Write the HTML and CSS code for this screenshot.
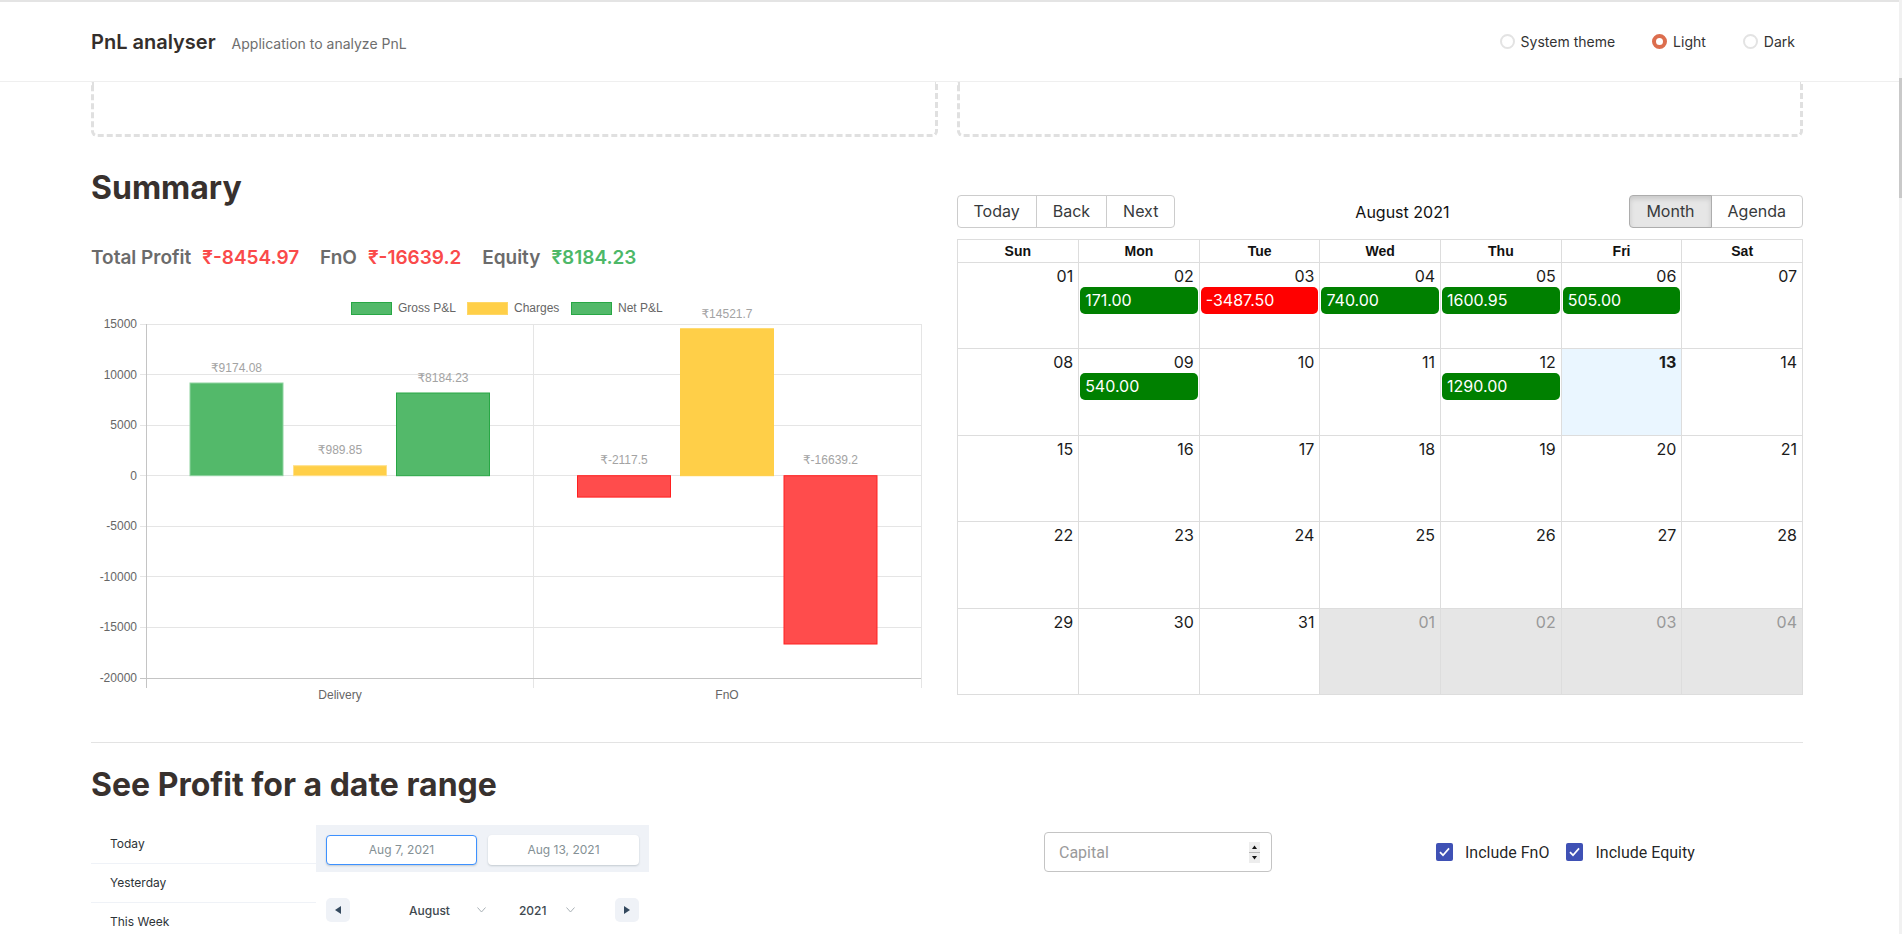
FILE: index.html
```html
<!DOCTYPE html>
<html lang="en">
<head>
<meta charset="utf-8">
<title>PnL analyser</title>
<link rel="stylesheet" href="styles.css">
</head>
<body>
<header class="topbar">
  <div class="container topbar-inner">
    <div class="brand">
      <span class="brand-title">PnL analyser</span>
      <span class="brand-sub">Application to analyze PnL</span>
    </div>
    <div class="theme">
      <label class="radio"><span class="radio-dot"></span>System theme</label>
      <label class="radio"><span class="radio-dot on"></span>Light</label>
      <label class="radio"><span class="radio-dot"></span>Dark</label>
    </div>
  </div>
</header>

<main class="container">
  <div class="drops">
    <div class="drop"></div>
    <div class="drop"></div>
  </div>

  <section class="summary">
    <div class="summary-left">
      <h2 class="h2">Summary</h2>
      <div class="totals">
        <span class="t-label">Total Profit</span><span class="t-val neg">₹-8454.97</span>
        <span class="t-label">FnO</span><span class="t-val neg">₹-16639.2</span>
        <span class="t-label">Equity</span><span class="t-val pos">₹8184.23</span>
      </div>
      <svg class="chart" width="847" height="420" viewBox="0 0 847 420" xmlns="http://www.w3.org/2000/svg">
        <g class="legend">
          <rect x="260.5" y="12.5" width="40" height="12" fill="#53b96a" stroke="#28a745"/>
          <text x="307" y="22">Gross P&amp;L</text>
          <rect x="376.5" y="12.5" width="40" height="12" fill="#ffcf48" stroke="#ffd766"/>
          <text x="423" y="22">Charges</text>
          <rect x="480.5" y="12.5" width="40" height="12" fill="#53b96a" stroke="#28a745"/>
          <text x="527" y="22">Net P&amp;L</text>
        </g>
        <g class="grid">
          <line x1="49" y1="34.5" x2="830" y2="34.5"/>
          <line x1="49" y1="84.5" x2="830" y2="84.5"/>
          <line x1="49" y1="135.5" x2="830" y2="135.5"/>
          <line x1="49" y1="185.5" x2="830" y2="185.5"/>
          <line x1="49" y1="236.5" x2="830" y2="236.5"/>
          <line x1="49" y1="286.5" x2="830" y2="286.5"/>
          <line x1="49" y1="337.5" x2="830" y2="337.5"/>
          <line x1="442.5" y1="34" x2="442.5" y2="398"/>
          <line x1="830.5" y1="34" x2="830.5" y2="398"/>
        </g>
        <line class="axis" x1="49" y1="388.5" x2="830" y2="388.5"/>
        <line class="axis" x1="55.5" y1="34" x2="55.5" y2="398"/>
        <g class="ticks">
          <text x="46" y="38">15000</text>
          <text x="46" y="89">10000</text>
          <text x="46" y="139">5000</text>
          <text x="46" y="190">0</text>
          <text x="46" y="240">-5000</text>
          <text x="46" y="291">-10000</text>
          <text x="46" y="341">-15000</text>
          <text x="46" y="392">-20000</text>
        </g>
        <g class="cats">
          <text x="249" y="409">Delivery</text>
          <text x="636" y="409">FnO</text>
        </g>
        <g class="bars">
          <rect x="99" y="93" width="93" height="92.7" fill="#53b96a" stroke="#8fd3a0"/>
          <rect x="202.5" y="175.7" width="93" height="10" fill="#ffcf48" stroke="#ffe08a"/>
          <rect x="305.5" y="103" width="93" height="82.7" fill="#53b96a" stroke="#28a745"/>
          <rect x="486.5" y="185.7" width="93" height="21.4" fill="#ff4c4c" stroke="#ff2020"/>
          <rect x="589.5" y="38.8" width="93" height="146.9" fill="#ffcf48" stroke="#ffcf48"/>
          <rect x="693" y="185.7" width="93" height="168.3" fill="#ff4c4c" stroke="#ff2020"/>
        </g>
        <g class="vals">
          <text x="145.5" y="82">₹9174.08</text>
          <text x="249" y="164">₹989.85</text>
          <text x="352" y="92">₹8184.23</text>
          <text x="533" y="174">₹-2117.5</text>
          <text x="636" y="28">₹14521.7</text>
          <text x="739.5" y="174">₹-16639.2</text>
        </g>
      </svg>
    </div>

    <div class="summary-right">
      <div class="rbc-toolbar">
        <div class="btn-group">
          <button class="btn">Today</button><button class="btn">Back</button><button class="btn">Next</button>
        </div>
        <div class="toolbar-label">August 2021</div>
        <div class="btn-group">
          <button class="btn active">Month</button><button class="btn">Agenda</button>
        </div>
      </div>
      <div class="month">
        <div class="mh">Sun</div><div class="mh">Mon</div><div class="mh">Tue</div><div class="mh">Wed</div><div class="mh">Thu</div><div class="mh">Fri</div><div class="mh">Sat</div>

        <div class="cell"><div class="date">01</div></div>
        <div class="cell"><div class="date">02</div><div class="event green">171.00</div></div>
        <div class="cell"><div class="date">03</div><div class="event red">-3487.50</div></div>
        <div class="cell"><div class="date">04</div><div class="event green">740.00</div></div>
        <div class="cell"><div class="date">05</div><div class="event green">1600.95</div></div>
        <div class="cell"><div class="date">06</div><div class="event green">505.00</div></div>
        <div class="cell"><div class="date">07</div></div>

        <div class="cell"><div class="date">08</div></div>
        <div class="cell"><div class="date">09</div><div class="event green">540.00</div></div>
        <div class="cell"><div class="date">10</div></div>
        <div class="cell"><div class="date">11</div></div>
        <div class="cell"><div class="date">12</div><div class="event green">1290.00</div></div>
        <div class="cell today"><div class="date">13</div></div>
        <div class="cell"><div class="date">14</div></div>

        <div class="cell"><div class="date">15</div></div>
        <div class="cell"><div class="date">16</div></div>
        <div class="cell"><div class="date">17</div></div>
        <div class="cell"><div class="date">18</div></div>
        <div class="cell"><div class="date">19</div></div>
        <div class="cell"><div class="date">20</div></div>
        <div class="cell"><div class="date">21</div></div>

        <div class="cell"><div class="date">22</div></div>
        <div class="cell"><div class="date">23</div></div>
        <div class="cell"><div class="date">24</div></div>
        <div class="cell"><div class="date">25</div></div>
        <div class="cell"><div class="date">26</div></div>
        <div class="cell"><div class="date">27</div></div>
        <div class="cell"><div class="date">28</div></div>

        <div class="cell"><div class="date">29</div></div>
        <div class="cell"><div class="date">30</div></div>
        <div class="cell"><div class="date">31</div></div>
        <div class="cell off"><div class="date">01</div></div>
        <div class="cell off"><div class="date">02</div></div>
        <div class="cell off"><div class="date">03</div></div>
        <div class="cell off"><div class="date">04</div></div>
      </div>
    </div>
  </section>

  <hr class="divider">

  <h2 class="h2 range-title">See Profit for a date range</h2>

  <div class="range-row">
    <div class="picker">
      <div class="ranges">
        <div class="static-range">Today</div>
        <div class="static-range">Yesterday</div>
        <div class="static-range">This Week</div>
      </div>
      <div class="cal">
        <div class="date-display">
          <div class="date-item active">Aug 7, 2021</div>
          <div class="date-item">Aug 13, 2021</div>
        </div>
        <div class="month-year">
          <span class="nav-btn">
            <svg width="6" height="8" viewBox="0 0 6 8"><path d="M6 0 L0 4 L6 8 Z" fill="#34495e"/></svg>
          </span>
          <div class="pickers">
            <span class="sel sel-month">August<svg class="chev" width="9" height="6" viewBox="0 0 9 6"><path d="M0.5 0.5 L4.5 5 L8.5 0.5" fill="none" stroke="#a8b0b5" stroke-width="1"/></svg></span>
            <span class="sel sel-year">2021<svg class="chev" width="9" height="6" viewBox="0 0 9 6"><path d="M0.5 0.5 L4.5 5 L8.5 0.5" fill="none" stroke="#a8b0b5" stroke-width="1"/></svg></span>
          </div>
          <span class="nav-btn">
            <svg width="6" height="8" viewBox="0 0 6 8"><path d="M0 0 L6 4 L0 8 Z" fill="#34495e"/></svg>
          </span>
        </div>
      </div>
    </div>

    <div class="capital">
      <span class="placeholder">Capital</span>
      <svg class="spin" width="11" height="21" viewBox="0 0 11 21">
        <rect x="0" y="0" width="11" height="21" fill="#ededed"/>
        <rect x="0" y="10" width="11" height="1" fill="#b5b5b5"/>
        <path d="M3 7 L5.5 3.5 L8 7 Z" fill="#111"/>
        <path d="M3 14 L5.5 17.5 L8 14 Z" fill="#111"/>
      </svg>
    </div>

    <div class="checks">
      <label class="check"><span class="box"><svg width="18" height="18" viewBox="0 0 18 18"><path d="M4.2 9.2 L7.4 12.4 L13.8 5.2" fill="none" stroke="#fff" stroke-width="1.8"/></svg></span>Include FnO</label>
      <label class="check"><span class="box"><svg width="18" height="18" viewBox="0 0 18 18"><path d="M4.2 9.2 L7.4 12.4 L13.8 5.2" fill="none" stroke="#fff" stroke-width="1.8"/></svg></span>Include Equity</label>
    </div>
  </div>
</main>

<div class="scrollbar"><div class="thumb"></div></div>
</body>
</html>
```

FILE: styles.css
```css
* { box-sizing: border-box; }

html, body {
  margin: 0;
  height: 934px;
  overflow: hidden;
}

body {
  font-family: Inter, "Noto Sans", sans-serif;
  color: #222;
  background: #fff;
}

.container {
  width: 1712px;
  margin-left: 91px;
}

/* ---------- header ---------- */
.topbar {
  height: 82px;
  border-top: 2px solid #e4e4e4;
  border-bottom: 1px solid #efefef;
}

.topbar-inner {
  height: 100%;
  display: flex;
  align-items: center;
  justify-content: space-between;
}

.brand {
  display: flex;
  align-items: baseline;
  gap: 16px;
}

.brand-title {
  font-size: 20px;
  font-weight: 600;
  color: #342e2b;
}

.brand-sub {
  font-size: 14px;
  color: #6e6e6e;
}

.theme {
  display: flex;
  gap: 37px;
  margin-right: 8px;
}

.radio {
  display: flex;
  align-items: center;
  gap: 6px;
  font-size: 14px;
  color: #333;
}

.radio-dot {
  width: 15px;
  height: 15px;
  border-radius: 50%;
  border: 2px solid #e3e3e3;
  background: #fff;
}

.radio-dot.on {
  border: 4.5px solid #dc6e4e;
}

/* ---------- dashed drop zones ---------- */
.drops {
  display: flex;
  gap: 19px;
}

.drop {
  flex: 1;
  height: 55px;
  border: 3px dashed #e0e0e0;
  border-top: 0;
  border-radius: 0 0 6px 6px;
}

/* ---------- summary ---------- */
.summary {
  display: flex;
  gap: 19px;
  margin-top: 31px;
}

.summary-left,
.summary-right {
  flex: 1;
  min-width: 0;
}

.h2 {
  margin: 0;
  font-size: 32px;
  line-height: 40px;
  font-weight: 700;
  color: #38312e;
}

.totals {
  margin-top: 38px;
  line-height: 24px;
  font-size: 19px;
  font-weight: 600;
}

.t-label {
  color: #6b6b6b;
  margin-right: 11px;
}

.t-val {
  margin-right: 16px;
}

.neg { color: #fa4a4a; }
.pos { color: #4db868; }

.chart {
  display: block;
  margin-top: 20px;
  font-family: "Liberation Sans", Arial, "DejaVu Sans", sans-serif;
  font-size: 12px;
}

.chart .legend text { fill: #666; }
.chart .grid line { stroke: #e5e5e5; stroke-width: 1; }
.chart .axis { stroke: #c4c4c4; stroke-width: 1; }
.chart .ticks text { fill: #666; text-anchor: end; }
.chart .cats text { fill: #666; text-anchor: middle; }
.chart .vals text { fill: #a3a3a3; text-anchor: middle; }

/* ---------- calendar ---------- */
.summary-right {
  padding-top: 27px;
}

.rbc-toolbar {
  display: flex;
  align-items: center;
  margin-bottom: 11px;
  font-size: 16px;
}

.btn-group {
  display: inline-flex;
}

.btn {
  font-family: Inter, "Noto Sans", sans-serif;
  font-size: 16px;
  line-height: 19px;
  padding: 6px 16px;
  color: #373a3c;
  background: #fff;
  border: 1px solid #ccc;
  border-radius: 0;
  margin: 0;
}

.btn + .btn { margin-left: -1px; }
.btn:first-child { border-radius: 4px 0 0 4px; }
.btn:last-child { border-radius: 0 4px 4px 0; }

.btn.active {
  background: #e6e6e6;
  border-color: #adadad;
  box-shadow: inset 0 3px 5px rgba(0, 0, 0, 0.125);
  position: relative;
}

.toolbar-label {
  flex: 1;
  text-align: center;
  padding: 0 10px;
  color: #111;
}

.month {
  display: grid;
  grid-template-columns: repeat(7, 1fr);
  grid-template-rows: 22px repeat(5, 1fr);
  height: 456px;
  border: 1px solid #ddd;
}

.mh {
  font-family: "Liberation Sans", Arial, sans-serif;
  font-weight: 700;
  font-size: 14px;
  line-height: 22px;
  text-align: center;
  color: #111;
  border-left: 1px solid #ddd;
}

.mh:first-child { border-left: 0; }

.cell {
  border-top: 1px solid #ddd;
  border-left: 1px solid #ddd;
  min-width: 0;
}

.cell:nth-child(7n + 1) { border-left: 0; }

.date {
  text-align: right;
  padding: 2px 5px 0 0;
  line-height: 22px;
  font-size: 16px;
  color: #1b1b1b;
}

.cell.today { background: #eaf6ff; }
.cell.today .date { font-weight: 700; }

.cell.off { background: #e6e6e6; }
.cell.off .date { color: #999; }

.event {
  margin: 0 1px;
  padding: 2px 5px;
  line-height: 23px;
  font-size: 16px;
  color: #fff;
  border-radius: 5px;
  white-space: nowrap;
  overflow: hidden;
}

.event.green { background: #008000; }
.event.red { background: #ff0000; }

/* ---------- divider & date range ---------- */
.divider {
  margin: 32px 0 0;
  border: 0;
  border-top: 1px solid #e3e3e3;
  height: 0;
}

.range-title {
  margin-top: 22px;
}

.range-row {
  display: flex;
  align-items: flex-start;
  margin-top: 20px;
}

.picker {
  display: flex;
  width: 558px;
}

.ranges {
  width: 225px;
}

.static-range {
  font-size: 12px;
  line-height: 18px;
  padding: 10px 19px;
  color: #2d3337;
  border-bottom: 1px solid #eff2f7;
}

.cal {
  width: 333px;
}

.date-display {
  background: #eff2f7;
  padding: 10px 10px 7px;
  display: flex;
  gap: 11px;
}

.date-item {
  flex: 1;
  height: 30px;
  line-height: 28px;
  text-align: center;
  font-size: 12px;
  color: #849095;
  background: #fff;
  border: 1px solid transparent;
  border-radius: 4px;
  box-shadow: 0 1px 2px rgba(35, 57, 66, 0.21);
}

.date-item.active {
  border-color: #3d91ff;
}

.month-year {
  display: flex;
  align-items: center;
  height: 60px;
  padding: 16px 10px 0;
}

.nav-btn {
  width: 24px;
  height: 24px;
  border-radius: 5px;
  background: #eff2f7;
  display: flex;
  align-items: center;
  justify-content: center;
}

.pickers {
  flex: 1;
  display: flex;
  align-items: center;
  padding-left: 59px;
  font-size: 12px;
  font-weight: 500;
  color: #3e484f;
}

.sel {
  display: flex;
  align-items: center;
}

.sel-month { gap: 27px; margin-right: 33px; }
.sel-year { gap: 20px; }

.capital {
  margin-left: 395px;
  margin-top: 7px;
  width: 228px;
  height: 40px;
  border: 1px solid #c4c4c4;
  border-radius: 4px;
  display: flex;
  align-items: center;
  justify-content: space-between;
  padding: 0 11px 0 14px;
  font-family: Roboto, "Liberation Sans", sans-serif;
  font-size: 16px;
}

.placeholder {
  color: #9a9a9a;
}

.checks {
  margin-left: 164px;
  margin-top: 7px;
  height: 40px;
  display: flex;
  align-items: center;
  font-family: Roboto, "Liberation Sans", sans-serif;
  font-size: 16px;
  color: rgba(0, 0, 0, 0.87);
}

.check {
  display: flex;
  align-items: center;
  gap: 12px;
  margin-right: 17px;
}

.box {
  width: 17px;
  height: 18px;
  border-radius: 2px;
  background: #3f51b5;
  display: flex;
  align-items: center;
  justify-content: center;
}

/* thin overlay scrollbar */
.scrollbar {
  position: fixed;
  top: 0;
  right: 0;
  width: 3px;
  height: 934px;
  background: #f1f1f1;
}

.thumb {
  margin-top: 78px;
  height: 120px;
  background: #c9c9c9;
}
```
